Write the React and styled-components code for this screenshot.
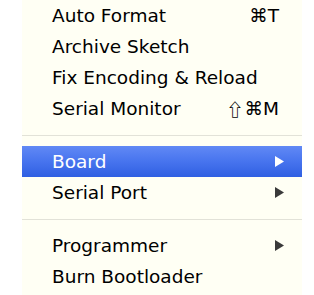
import styled, { createGlobalStyle } from 'styled-components';

const GlobalStyle = createGlobalStyle`
  html, body {
    margin: 0;
    padding: 0;
    background: #ffffff;
  }
`;

const Page = styled.div`
  width: 314px;
  height: 295px;
  overflow: hidden;
  padding-left: 22px;
  box-sizing: border-box;
`;

const Menu = styled.ul`
  list-style: none;
  margin: 0;
  padding: 0;
  width: 280px;
  height: 295px;
  background: #fffff4;
  font-family: "DejaVu Sans", "Liberation Sans", sans-serif;
  font-size: 18.5px;
  color: #000;
`;

const Item = styled.li`
  display: flex;
  align-items: center;
  justify-content: space-between;
  height: 31px;
  padding: 0 18px 0 30px;
  box-sizing: border-box;
  color: ${({ $active }) => ($active ? '#ffffff' : '#000000')};
  background: ${({ $active }) =>
    $active ? 'linear-gradient(to bottom, #6189f5 0%, #4774ee 50%, #2f5fe2 100%)' : 'transparent'};
`;

const Shortcut = styled.span`
  display: flex;
  align-items: center;
  gap: 1px;
  margin-right: 5px;
`;

const ShiftGlyph = styled.span`
  font-family: "Noto Sans CJK JP", "DejaVu Sans", sans-serif;
  font-size: 17px;
  font-weight: 700;
  line-height: 1;
`;

const Arrow = styled.svg`
  width: 9px;
  height: 11px;
  fill: ${({ $active }) => ($active ? '#ffffff' : '#3a3a3a')};
`;

const Separator = styled.li`
  height: 22px;
  display: flex;
  align-items: center;

  &::after {
    content: '';
    display: block;
    width: 100%;
    height: 1px;
    background: #e2e2d8;
  }
`;

const SubArrow = ({ active }) => (
  <Arrow $active={active} viewBox="0 0 9 11">
    <polygon points="0,0 9,5.5 0,11" />
  </Arrow>
);

const App = () => (
  <>
    <GlobalStyle />
    <Page>
      <Menu>
        <Item>
          <span>Auto Format</span>
          <Shortcut>⌘T</Shortcut>
        </Item>
        <Item>
          <span>Archive Sketch</span>
        </Item>
        <Item>
          <span>Fix Encoding &amp; Reload</span>
        </Item>
        <Item>
          <span>Serial Monitor</span>
          <Shortcut>
            <ShiftGlyph>⇧</ShiftGlyph>⌘M
          </Shortcut>
        </Item>
        <Separator />
        <Item $active>
          <span>Board</span>
          <SubArrow active />
        </Item>
        <Item>
          <span>Serial Port</span>
          <SubArrow />
        </Item>
        <Separator />
        <Item>
          <span>Programmer</span>
          <SubArrow />
        </Item>
        <Item>
          <span>Burn Bootloader</span>
        </Item>
      </Menu>
    </Page>
  </>
);

export default App;
